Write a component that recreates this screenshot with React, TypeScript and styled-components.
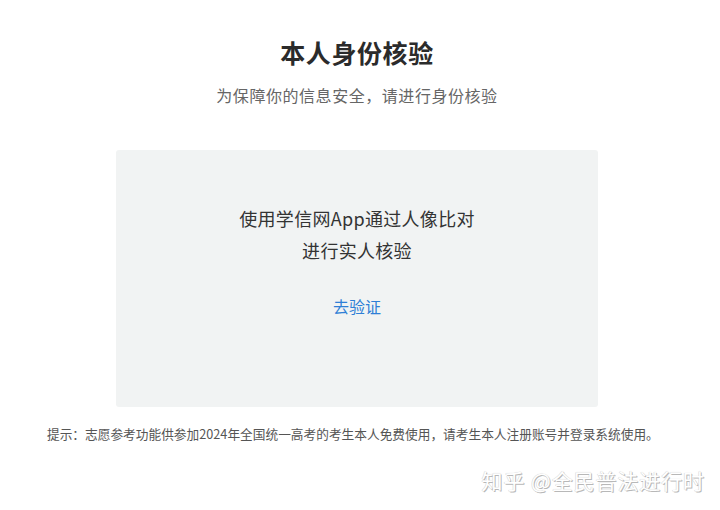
import React, { FC } from 'react';
import styled, { createGlobalStyle } from 'styled-components';

const GlobalStyle = createGlobalStyle`
  html, body {
    margin: 0;
    padding: 0;
    background: #ffffff;
  }
  body {
    font-family: "Noto Sans CJK SC", "Noto Sans", sans-serif;
  }
`;

const Page = styled.div`
  position: relative;
  width: 720px;
  height: 510px;
  overflow: hidden;
  padding-top: 34px;
  box-sizing: border-box;
`;

const Column = styled.div`
  width: 714px;
  display: flex;
  flex-direction: column;
  align-items: center;
`;

const Title = styled.h1`
  margin: 0;
  font-size: 25px;
  line-height: 36px;
  font-weight: 700;
  color: #2b2b2b;
  letter-spacing: 0.6px;
`;

const Subtitle = styled.p`
  margin: 13px 0 0;
  font-size: 16px;
  line-height: 24px;
  color: #666666;
  letter-spacing: 0.55px;
`;

const Card = styled.section`
  margin-top: 43px;
  width: 482px;
  height: 257px;
  box-sizing: border-box;
  padding-top: 52px;
  background: #f1f3f3;
  border-radius: 3px;
  display: flex;
  flex-direction: column;
  align-items: center;
`;

const CardText = styled.p`
  margin: 0;
  font-size: 18px;
  line-height: 32px;
  color: #333333;
  text-align: center;
  letter-spacing: 0.3px;
`;

const VerifyLink = styled.a`
  margin-top: 28px;
  font-size: 16px;
  line-height: 24px;
  color: #2f7fd6;
  text-decoration: none;
  cursor: pointer;
`;

const Note = styled.p`
  align-self: stretch;
  margin: 17px 0 0;
  padding-left: 47px;
  font-size: 12.7px;
  line-height: 20px;
  color: #555555;
  white-space: nowrap;
`;

const Watermark = styled.div`
  position: absolute;
  right: 15px;
  bottom: 17px;
  font-size: 21px;
  line-height: 26px;
  color: #ffffff;
  letter-spacing: 0.9px;
  text-shadow: 1px 1px 0 #b8b8b8, -0.5px -0.5px 0 #dadada, 0 0 1px #cccccc;
`;

const App: FC = () => {
  return (
    <>
      <GlobalStyle />
      <Page>
        <Column>
          <Title>本人身份核验</Title>
          <Subtitle>为保障你的信息安全，请进行身份核验</Subtitle>
          <Card>
            <CardText>
              使用学信网App通过人像比对
              <br />
              进行实人核验
            </CardText>
            <VerifyLink>去验证</VerifyLink>
          </Card>
          <Note>
            提示：志愿参考功能供参加2024年全国统一高考的考生本人免费使用，请考生本人注册账号并登录系统使用。
          </Note>
        </Column>
        <Watermark>知乎 @全民普法进行时</Watermark>
      </Page>
    </>
  );
};

export default App;
